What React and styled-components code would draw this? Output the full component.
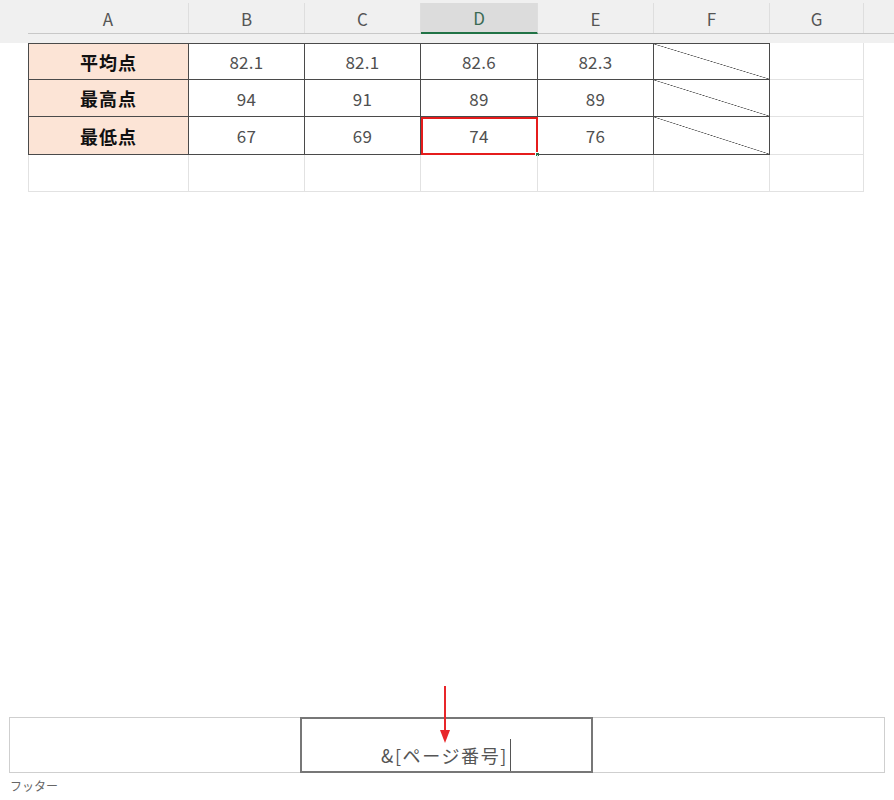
import React from "react"
import styled, { createGlobalStyle, css } from "styled-components"

const GlobalStyle = createGlobalStyle`
  body {
    margin: 0;
    background: #ffffff;
    font-family: "Noto Sans CJK JP", "Noto Sans", sans-serif;
  }
`

const COLS = "161px 116px 116px 117px 116px 116px 94px"

const Page = styled.div`
  position: relative;
  width: 894px;
  height: 800px;
  display: flex;
  flex-direction: column;
  overflow: hidden;
`

const HeaderBand = styled.div`
  height: 43px;
  box-sizing: border-box;
  padding: 3px 0 0 28px;
  background: #f0f0f0;
`

const HeaderRow = styled.div`
  display: grid;
  grid-template-columns: ${COLS};
  height: 31px;
  box-sizing: border-box;
  border-bottom: 1px solid #c8c8c8;
`

const ColHead = styled.div`
  display: flex;
  align-items: center;
  justify-content: center;
  font-size: 17px;
  color: #555;
  border-right: 1px solid #dedede;
  box-sizing: border-box;
  ${(p) =>
    p.$active &&
    css`
      background: #dcdcdc;
      border-bottom: 2px solid #217346;
      margin-bottom: -1px;
      color: #3a6b54;
    `}
`

const Sheet = styled.div`
  display: grid;
  grid-template-columns: ${COLS};
  grid-template-rows: 37px 37px 38px 37px;
  margin-left: 28px;
  width: 837px;
`

const Cell = styled.div`
  position: relative;
  display: flex;
  align-items: center;
  justify-content: center;
  box-sizing: border-box;
  font-size: 17px;
  letter-spacing: 0.3px;
  color: #505050;
  border-right: 1px solid ${(p) => (p.$ruled ? "#4a4a4a" : "#e2e2e2")};
  border-bottom: 1px solid ${(p) => (p.$ruled ? "#4a4a4a" : "#e2e2e2")};
  ${(p) => p.$top && css`border-top: 1px solid ${p.$ruled ? "#4a4a4a" : "#e2e2e2"};`}
  ${(p) => p.$left && css`border-left: 1px solid ${p.$ruled ? "#4a4a4a" : "#e2e2e2"};`}
  ${(p) =>
    p.$label &&
    css`
      background: #fce4d6;
      color: #111;
      font-weight: 700;
      font-size: 18px;
      letter-spacing: 1px;
    `}
  ${(p) =>
    p.$slash &&
    css`
      background: linear-gradient(
        to top right,
        transparent calc(50% - 0.6px),
        #555 50%,
        transparent calc(50% + 0.6px)
      );
    `}
  ${(p) =>
    p.$selected &&
    css`
      outline: 2px solid #e51c1c;
      outline-offset: -2px;
    `}
`

const FillHandle = styled.span`
  position: absolute;
  right: -3px;
  bottom: -3px;
  width: 5px;
  height: 5px;
  background: #217346;
  border: 1px solid #fff;
  box-sizing: border-box;
`

const Spacer = styled.div`
  flex: 1;
`

const Footer = styled.div`
  margin: 0 9px 0 9px;
  height: 56px;
  box-sizing: border-box;
  display: grid;
  grid-template-columns: 290px 293px 293px;
  border: 1px solid #cfcfcf;
`

const FooterPart = styled.div`
  position: relative;
  display: flex;
  align-items: flex-end;
  justify-content: center;
  box-sizing: border-box;
  ${(p) =>
    p.$editing &&
    css`
      border: 2px solid #777;
      margin: -1px 0;
      padding-bottom: 4px;
    `}
`

const FooterText = styled.span`
  position: relative;
  font-size: 18px;
  line-height: 24px;
  color: #555;
  letter-spacing: 1.6px;
  margin-right: 4px;
`

const Caret = styled.span`
  position: absolute;
  left: calc(100% + 2px);
  bottom: -4px;
  height: 32px;
  border-left: 1px solid #555;
`

const FooterLabel = styled.div`
  margin: 4px 0 6px 10px;
  font-size: 12px;
  color: #666;
  height: 17px;
`

const Arrow = styled.svg`
  position: absolute;
  left: 439px;
  top: 686px;
`

const columns = ["A", "B", "C", "D", "E", "F", "G"]

const rows = [
  { label: "平均点", values: ["82.1", "82.1", "82.6", "82.3"] },
  { label: "最高点", values: ["94", "91", "89", "89"] },
  { label: "最低点", values: ["67", "69", "74", "76"] },
]

export default function App() {
  return (
    <Page>
      <GlobalStyle />
      <HeaderBand>
        <HeaderRow>
          {columns.map((c) => (
            <ColHead key={c} $active={c === "D"}>
              {c}
            </ColHead>
          ))}
        </HeaderRow>
      </HeaderBand>
      <Sheet>
        {rows.map((r, ri) => (
          <React.Fragment key={r.label}>
            <Cell $ruled $label $left $top={ri === 0}>
              {r.label}
            </Cell>
            {r.values.map((v, vi) => (
              <Cell key={vi} $ruled $top={ri === 0} $selected={ri === 2 && vi === 2}>
                {v}
                {ri === 2 && vi === 2 && <FillHandle />}
              </Cell>
            ))}
            <Cell $ruled $slash $top={ri === 0} />
            <Cell />
          </React.Fragment>
        ))}
        <Cell $left />
        <Cell />
        <Cell />
        <Cell />
        <Cell />
        <Cell />
        <Cell />
      </Sheet>
      <Spacer />
      <Footer>
        <FooterPart />
        <FooterPart $editing>
          <FooterText>
            &amp;[ページ番号]
            <Caret />
          </FooterText>
        </FooterPart>
        <FooterPart />
      </Footer>
      <FooterLabel>フッター</FooterLabel>
      <Arrow width="12" height="58" viewBox="0 0 12 58">
        <line x1="6" y1="0" x2="6" y2="46" stroke="#e8262a" strokeWidth="2" />
        <polygon points="1,44 11,44 6,57" fill="#e8262a" />
      </Arrow>
    </Page>
  )
}
